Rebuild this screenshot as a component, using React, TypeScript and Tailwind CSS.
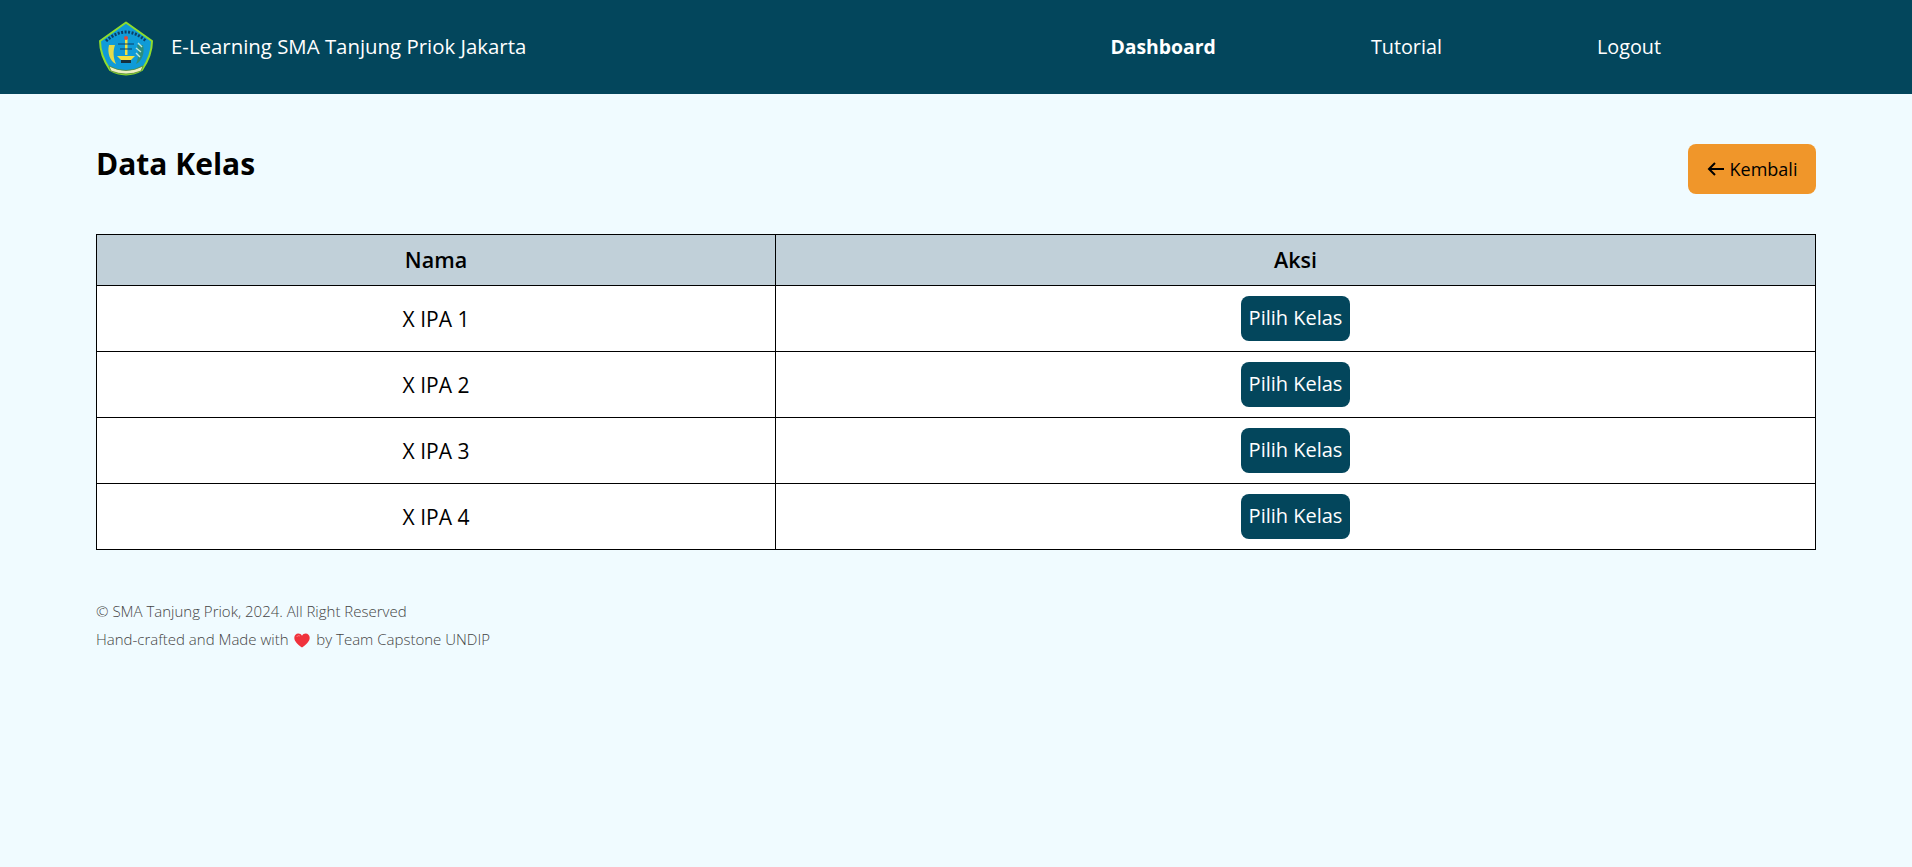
const kelas = ["X IPA 1", "X IPA 2", "X IPA 3", "X IPA 4"];

function Logo() {
  return (
    <svg viewBox="0 0 56 56" className="w-[56px] h-[56px] mt-[4px] shrink-0">
      <path d="M28 1.5 L54 20 C54 30 50 40 44 49 C34 55 22 55 12 49 C6 40 2 30 2 20 Z" fill="#0f9bd8" stroke="#8fdc2c" strokeWidth="2" strokeLinejoin="round" />
      <path d="M8 20 Q28 2 48 20" fill="none" stroke="#0b3f66" strokeWidth="3" strokeDasharray="2 1.5" />
      <path d="M11 24 C9 32 12 40 18 43 C15 36 15 30 17 24 Z" fill="#e4dc4a" />
      <path d="M45 24 C47 32 44 40 38 43 C41 36 41 30 39 24 Z" fill="#2c8f7c" />
      <path d="M40 22 L44 26 M38 27 L43 31 M38 32 L42 36" stroke="#bfe8d8" strokeWidth="1.4" />
      <rect x="27" y="18" width="2.5" height="16" fill="#f2e23e" />
      <circle cx="28" cy="17" r="2" fill="#e04a3a" />
      <path d="M19 35 H37 L33 39 H23 Z" fill="#f2e23e" />
      <path d="M20 23 H36 M22 28 H34" stroke="#0b3f66" strokeWidth="1" />
      <rect x="23" y="39" width="10" height="3" fill="#14313f" />
      <path d="M11 45 Q28 54 45 45 L43 50 Q28 56 13 50 Z" fill="#eef0c0" stroke="#5a8a30" strokeWidth="0.8" />
    </svg>
  );
}

function Heart() {
  return (
    <svg viewBox="0 0 16 15" className="w-[16px] h-[15px] mx-[2px] inline-block align-[-3px]">
      <path d="M8 14.5 C3 11 0.3 8 0.3 4.8 C0.3 2.2 2.2 0.5 4.3 0.5 C5.9 0.5 7.2 1.4 8 2.8 C8.8 1.4 10.1 0.5 11.7 0.5 C13.8 0.5 15.7 2.2 15.7 4.8 C15.7 8 13 11 8 14.5 Z" fill="#f0323c" />
      <path d="M3 3.5 C3.6 2.6 4.6 2.4 5.4 2.8" fill="none" stroke="#ff8a8f" strokeWidth="1" strokeLinecap="round" />
    </svg>
  );
}

export default function App() {
  return (
    <div className="min-h-screen bg-[#f0fbff] text-black font-['Open_Sans',sans-serif]">
      {/* Navbar */}
      <header className="h-[94px] bg-[#03465c] px-[96px] flex items-center justify-between text-white">
        <div className="flex items-center gap-[17px] pl-[2px]">
          <Logo />
          <span className="text-[20.4px] font-medium pb-[2px]">E-Learning SMA Tanjung Priok Jakarta</span>
        </div>
        <nav className="flex items-center gap-[155px] pr-[155px] text-[19.8px]">
          <a className="font-bold text-[19.4px]">Dashboard</a>
          <a className="font-medium">Tutorial</a>
          <a className="font-medium">Logout</a>
        </nav>
      </header>

      <main className="px-[96px]">
        <div className="flex items-start justify-between pt-[50px]">
          <h1 className="text-[30px] leading-[40px] font-bold">Data Kelas</h1>
          <button className="h-[50px] w-[128px] rounded-lg bg-[#f0962a] flex items-center justify-center gap-[6px] text-[18px]">
            <svg viewBox="0 0 17 14" className="w-[17px] h-[14px]" fill="none" stroke="currentColor" strokeWidth="2">
              <path d="M17 7 H2 M8 1 L2 7 L8 13" />
            </svg>
            Kembali
          </button>
        </div>

        <table className="w-full mt-[40px] border-collapse bg-white">
          <thead>
            <tr className="h-[51px] bg-[#c1d0d9]">
              <th className="w-[679px] border border-black text-[21.5px] font-semibold">Nama</th>
              <th className="border border-black text-[21.5px] font-semibold">Aksi</th>
            </tr>
          </thead>
          <tbody>
            {kelas.map((k) => (
              <tr key={k} className="h-[66px]">
                <td className="border border-black text-center text-[21px] pt-[2px]">{k}</td>
                <td className="border border-black text-center">
                  <button className="h-[45px] w-[109px] rounded-lg bg-[#03465c] text-white text-[20px] align-middle pb-[2px]">Pilih Kelas</button>
                </td>
              </tr>
            ))}
          </tbody>
        </table>

        <footer className="mt-[47px] text-[15px] leading-[28px] font-light text-[#444]">
          <p>© SMA Tanjung Priok, 2024. All Right Reserved</p>
          <p>Hand-crafted and Made with <Heart /> by Team Capstone UNDIP</p>
        </footer>
      </main>
    </div>
  );
}
